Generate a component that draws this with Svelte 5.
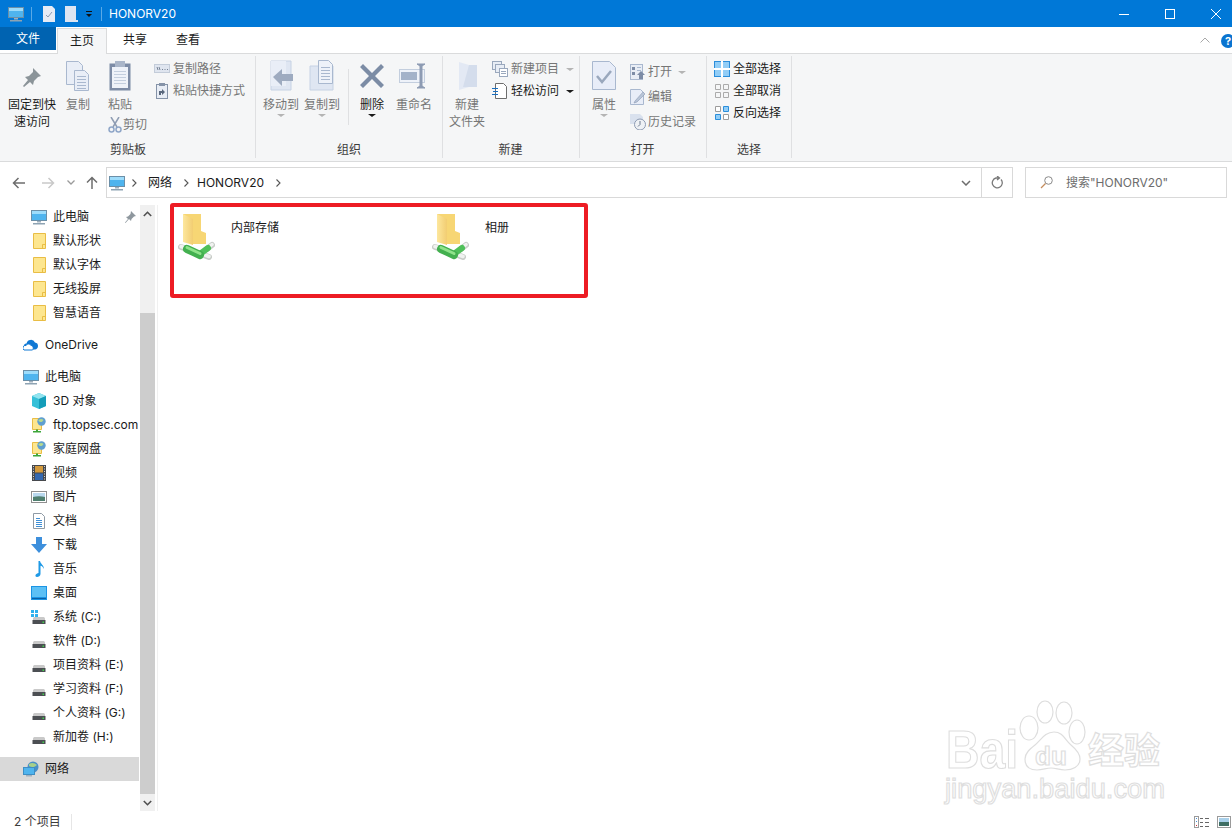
<script>
  const clipSmall = [
    { label: '复制路径', icon: 'path' },
    { label: '粘贴快捷方式', icon: 'shortcut' }
  ];
  const selectRows = [
    { label: '全部选择', icon: 'all' },
    { label: '全部取消', icon: 'none' },
    { label: '反向选择', icon: 'invert' }
  ];
  const quick = ['默认形状', '默认字体', '无线投屏', '智慧语音'];
  const computer = [
    { label: '3D 对象', icon: 'cube' },
    { label: 'ftp.topsec.com', icon: 'netplace' },
    { label: '家庭网盘', icon: 'netplace' },
    { label: '视频', icon: 'film' },
    { label: '图片', icon: 'picture' },
    { label: '文档', icon: 'document' },
    { label: '下载', icon: 'download' },
    { label: '音乐', icon: 'music' },
    { label: '桌面', icon: 'desktop' },
    { label: '系统 (C:)', icon: 'system' },
    { label: '软件 (D:)', icon: 'drive' },
    { label: '项目资料 (E:)', icon: 'drive' },
    { label: '学习资料 (F:)', icon: 'drive' },
    { label: '个人资料 (G:)', icon: 'drive' },
    { label: '新加卷 (H:)', icon: 'drive' }
  ];
  const shares = ['内部存储', '相册'];
</script>

{#snippet monitor()}
  <svg width="16" height="16" viewBox="0 0 16 16">
    <rect x="0.500" y="1.500" width="15" height="10" fill="#4fb4ee" stroke="#6b8fa8" />
    <rect x="1" y="2" width="14" height="3" fill="#9ddcfb" />
    <rect x="6" y="12" width="4" height="1.500" fill="#9fb0bd" />
    <rect x="2" y="14" width="12" height="1.500" fill="#8ea3b3" />
  </svg>
{/snippet}

{#snippet quickFolder()}
  <svg width="16" height="16" viewBox="0 0 16 16">
    <path d="M2.500 0.500h12v15h-12z" fill="#fde68f" stroke="#e9bd45" />
    <path d="M11.500 15.500v-4h3" fill="none" stroke="#e9bd45" />
  </svg>
{/snippet}

{#snippet treeIcon(name)}
  {#if name === 'cube'}
    <svg width="16" height="16" viewBox="0 0 16 16">
      <path d="M8 0l7 3v10l-7 3-7-3V3z" fill="#35c0d8" />
      <path d="M8 0l7 3-7 3-7-3z" fill="#93e4ef" />
      <path d="M8 6l7-3v10l-7 3z" fill="#149db9" />
    </svg>
  {:else if name === 'netplace'}
    <svg width="16" height="16" viewBox="0 0 16 16">
      <path d="M1.500 1.500h9v11h-9z" fill="#fde68f" stroke="#e9bd45" />
      <circle cx="10.500" cy="4.500" r="4.200" fill="#5f9fd0" />
      <path d="M7.500 3c2-1.500 4-1 5 0-1 2-3 3-5 1z" fill="#b5d98e" />
      <rect x="5" y="12.500" width="2" height="2" fill="#3da63a" />
      <rect x="2" y="14" width="8" height="1.500" fill="#3da63a" />
    </svg>
  {:else if name === 'film'}
    <svg width="16" height="16" viewBox="0 0 16 16">
      <rect x="1" y="0" width="14" height="16" fill="#47494d" />
      <rect x="4" y="1" width="8" height="6.500" fill="#d49a3d" />
      <rect x="4" y="8.500" width="8" height="6.500" fill="#3468b0" />
      <path d="M2 1.500h1M2 4h1M2 6.500h1M2 9h1M2 11.500h1M2 14h1M13 1.500h1M13 4h1M13 6.500h1M13 9h1M13 11.500h1M13 14h1" stroke="#d6d6d6" />
    </svg>
  {:else if name === 'picture'}
    <svg width="16" height="16" viewBox="0 0 16 16">
      <rect x="0.500" y="2.500" width="15" height="11" fill="#fff" stroke="#8f8f8f" />
      <rect x="2" y="4" width="12" height="4" fill="#b9d8ee" />
      <path d="M2 8c4-1 8-1 12 0v4H2z" fill="#4f7f6f" />
    </svg>
  {:else if name === 'document'}
    <svg width="16" height="16" viewBox="0 0 16 16">
      <path d="M2.500 0.500h8l3 3v12h-11z" fill="#fff" stroke="#8f9aa5" />
      <path d="M5 5.500h4M5 7.500h6M5 9.500h6M5 11.500h6M5 13.500h6" stroke="#3f8fd6" />
    </svg>
  {:else if name === 'download'}
    <svg width="16" height="16" viewBox="0 0 16 16">
      <path d="M5 0h6v7h5l-8 9-8-9h5z" fill="#3d8fdc" />
    </svg>
  {:else if name === 'music'}
    <svg width="16" height="16" viewBox="0 0 16 16">
      <path d="M7.500 0h1.500c.5 3 4 4 4 8-1-2-2-3-3.500-3.300V13c0 2-2 3-3.500 3S4 14.500 4.800 13.500 6.500 12 7.500 12z" fill="#1f9ae6" />
    </svg>
  {:else if name === 'desktop'}
    <svg width="16" height="16" viewBox="0 0 16 16">
      <rect x="0" y="1" width="16" height="14" fill="#1b94e4" />
      <rect x="1" y="2" width="14" height="10" fill="#5cc0f5" />
      <rect x="1" y="13" width="14" height="1" fill="#0b5fa5" />
    </svg>
  {:else}
    <svg width="16" height="16" viewBox="0 0 16 16">
      {#if name === 'system'}
        <path d="M0 1h3v3H0zM4 1h3v3H4zM0 5h3v3H0zM4 5h3v3H4z" fill="#2fb1ee" />
      {/if}
      <path d="M2 9.500c0-1 1-1.500 2-1.500h8c1 0 2 .5 2 1.500V11H2z" fill="#c9c9c9" />
      <rect x="1.500" y="11" width="13" height="4" fill="#4c4f53" />
      <rect x="11.500" y="12.500" width="1.500" height="1.500" fill="#3fd04a" />
    </svg>
  {/if}
{/snippet}

{#snippet shareFolder()}
  <svg class="share-icon" width="37" height="50" viewBox="0 0 37 50">
    <defs>
      <linearGradient id="share-front" x1="0" y1="0" x2="1" y2="0">
        <stop offset="0" stop-color="#fde79d" />
        <stop offset="1" stop-color="#f2cd72" />
      </linearGradient>
    </defs>
    <path d="M5 1h18v17l5 2v11H12z" fill="#f7d674" />
    <path d="M5 1l10 5v26l-10-3z" fill="url(#share-front)" />
    <path d="M3 34l6 2M34 32l-5 4M31 44l-8-3" stroke="#c8ccc8" stroke-width="6" stroke-linecap="round" />
    <path d="M3 33.500l6 2M34 31.500l-5 4M31 43.500l-8-3" stroke="#f0f2f0" stroke-width="3.500" stroke-linecap="round" />
    <path d="M22 41l8-6" stroke="#4fc05a" stroke-width="6" stroke-linecap="round" />
    <path d="M9 36l13 6" stroke="#43b04f" stroke-width="8" stroke-linecap="round" />
    <path d="M9 34.500l13 6" stroke="#8fe38a" stroke-width="3" stroke-linecap="round" />
  </svg>
{/snippet}

<div class="window">
  <header class="titlebar">
    <span class="qa-icon qa-monitor">{@render monitor()}</span>
    <span class="qa-sep"></span>
    <svg class="qa-doc" width="12" height="16" viewBox="0 0 12 16">
      <path d="M0 0h9l3 3v13H0z" fill="#e6ebf5" />
      <path d="M3 9l2 2 4-5" fill="none" stroke="#8d9bb3" />
    </svg>
    <svg class="qa-new" width="13" height="16" viewBox="0 0 13 16">
      <path d="M0 0h11v14l2 0v2H0z" fill="#dde5f2" />
    </svg>
    <svg class="qa-drop" width="8" height="8" viewBox="0 0 8 8">
      <path d="M1 1.500h6" stroke="#111" stroke-width="1" />
      <path d="M1 4h6L4 7z" fill="#111" />
    </svg>
    <span class="qa-sep"></span>
    <span class="title">HONORV20</span>
    <div class="window-buttons">
      <svg width="12" height="12" viewBox="0 0 12 12"><path d="M1 6.500h10" stroke="#fff" /></svg>
      <svg width="12" height="12" viewBox="0 0 12 12"><rect x="1.500" y="1.500" width="9" height="9" fill="none" stroke="#fff" /></svg>
      <svg width="12" height="12" viewBox="0 0 12 12"><path d="M1 1l10 10M11 1L1 11" stroke="#fff" /></svg>
    </div>
  </header>

  <nav class="tabs">
    <span class="tab-file">文件</span>
    <span class="tab-home">主页</span>
    <span class="tab">共享</span>
    <span class="tab tab-view">查看</span>
    <svg class="collapse" width="10" height="6" viewBox="0 0 10 6"><path d="M0.500 5.500L5 1l4.500 4.500" fill="none" stroke="#a8a8a8" /></svg>
    <span class="help">?</span>
  </nav>

  <section class="ribbon">
    <div class="group group-clip">
      <div class="group-body">
        <div class="big big-pin">
          <svg width="32" height="32" viewBox="0 0 32 32">
            <path d="M17 8l8 8-3 1-4 4-1 4-3-3-6 5-1-1 5-6-3-3 4-1 4-4z" fill="#8b9499" />
          </svg>
          <span class="big-label dark">固定到快<br />速访问</span>
        </div>
        <div class="big big-copy">
          <svg width="32" height="32" viewBox="0 0 32 32">
            <path d="M4.500 1.500h12l4 4v19h-16z" fill="#e9eef7" stroke="#a9b8cf" />
            <path d="M12.500 10.500h10l4 4v16h-14z" fill="#e9eef7" stroke="#a9b8cf" />
            <path d="M15 16.500h9M15 19.500h9M15 22.500h9M15 25.500h9M15 28.500h9" stroke="#a9b8cf" />
          </svg>
          <span class="big-label">复制</span>
        </div>
        <div class="big big-paste">
          <svg width="32" height="32" viewBox="0 0 32 32">
            <rect x="5.500" y="3.500" width="21" height="27" fill="#7d8ca6" />
            <rect x="8" y="7" width="16" height="21" fill="#eef2f9" />
            <rect x="11" y="1" width="10" height="6" fill="#aab6c9" />
            <path d="M10 11.500h12M10 14.500h12M10 17.500h12M10 20.500h12M10 23.500h12" stroke="#c3cede" />
          </svg>
          <span class="big-label">粘贴</span>
          <div class="cut">
            <svg width="16" height="16" viewBox="0 0 16 16">
              <path d="M4 0l6 10M12 0L6 10" stroke="#8f9db3" stroke-width="1.500" />
              <circle cx="4.500" cy="12.500" r="2.500" fill="none" stroke="#8fa6c8" stroke-width="1.500" />
              <circle cx="11.500" cy="12.500" r="2.500" fill="none" stroke="#8fa6c8" stroke-width="1.500" />
            </svg>
            <span class="muted">剪切</span>
          </div>
        </div>
        <div class="small-col small-clip">
          {#each clipSmall as row}
            <div class="small-row">
              {#if row.icon === 'path'}
                <svg width="16" height="16" viewBox="0 0 16 16">
                  <rect x="0.500" y="3.500" width="15" height="8" fill="#dfe5ef" stroke="#c3ccd9" />
                  <path d="M3 6l1 3M5 6l1 3M8 8.500h1M10.500 8.500h1M13 8.500h1" stroke="#59677c" stroke-width="0.800" />
                </svg>
              {:else}
                <svg width="16" height="16" viewBox="0 0 16 16">
                  <rect x="2.500" y="1.500" width="11" height="14" fill="#e8edf5" stroke="#8593a8" />
                  <rect x="5" y="0" width="6" height="3" fill="#8593a8" />
                  <path d="M5 12V8h3V6l3 3-3 3v-2H7v2z" fill="#59677c" />
                </svg>
              {/if}
              <span class="muted">{row.label}</span>
            </div>
          {/each}
        </div>
      </div>
      <div class="group-label">剪贴板</div>
    </div>

    <div class="group group-org">
      <div class="group-body">
        <div class="big">
          <svg width="32" height="32" viewBox="0 0 32 32">
            <path d="M6 1h20v29l-20 0z" fill="#dfe6f2" stroke="#c6d2e4" />
            <path d="M6 1h15v25H6z" fill="#e9eef7" />
            <path d="M8 17l9-8v5h11v7H17v5z" fill="#9eabc0" />
          </svg>
          <span class="big-label">移动到</span>
          <span class="caret-muted"></span>
        </div>
        <div class="big big-copyto">
          <svg width="32" height="32" viewBox="0 0 32 32">
            <path d="M4 6h23v24H4z" fill="#dfe6f2" stroke="#c6d2e4" />
            <path d="M12.500 0.500h10l4 4v19h-14z" fill="#eef2f9" stroke="#a9b8cf" />
            <path d="M15 7.500h9M15 10.500h9M15 13.500h9M15 16.500h9M15 19.500h9" stroke="#a9b8cf" />
          </svg>
          <span class="big-label">复制到</span>
          <span class="caret-muted"></span>
        </div>
        <span class="rule"></span>
        <div class="big big-delete">
          <svg width="32" height="32" viewBox="0 0 32 32">
            <path d="M4 7l3-3 9 9 9-9 3 3-9 9 9 9-3 3-9-9-9 9-3-3 9-9z" fill="#7c8ca5" />
          </svg>
          <span class="big-label dark">删除</span>
          <span class="caret-dark"></span>
        </div>
        <div class="big big-rename">
          <svg width="32" height="32" viewBox="0 0 32 32">
            <rect x="1.500" y="9.500" width="25" height="13" fill="#eef2f9" stroke="#c3cede" />
            <rect x="3" y="12" width="16" height="8" fill="#a3b2c9" />
            <path d="M19 4h8l-3 2v20l3 2h-8l3-2V6z" fill="#8d9bb3" stroke="#8d9bb3" />
          </svg>
          <span class="big-label">重命名</span>
        </div>
      </div>
      <div class="group-label">组织</div>
    </div>

    <div class="group group-new">
      <div class="group-body">
        <div class="big">
          <svg width="32" height="32" viewBox="0 0 32 32">
            <path d="M8 2l10 3v22l-10 3z" fill="#e3e9f4" />
            <path d="M18 5h8v22H12z" fill="#d4ddec" />
          </svg>
          <span class="big-label">新建<br />文件夹</span>
        </div>
        <div class="small-col small-new">
          <div class="small-row">
            <svg width="16" height="16" viewBox="0 0 16 16">
              <rect x="0.500" y="0.500" width="9" height="8" fill="#e8edf5" stroke="#9aa8bd" />
              <rect x="3.500" y="3.500" width="9" height="8" fill="#e8edf5" stroke="#9aa8bd" />
              <rect x="7.500" y="7.500" width="8" height="8" fill="#fff" stroke="#9aa8bd" />
              <path d="M9 10.500h5M9 12.500h5" stroke="#9aa8bd" />
            </svg>
            <span class="muted">新建项目</span>
            <span class="caret-muted inline"></span>
          </div>
          <div class="small-row">
            <svg width="16" height="16" viewBox="0 0 16 16">
              <path d="M3.500 0.500h8l3 3v12h-11z" fill="#fff" stroke="#6d6d6d" />
              <path d="M0 5.500h6M1 8.500h5M0 11.500h6" stroke="#1a6fc0" />
            </svg>
            <span class="dark">轻松访问</span>
            <span class="caret-dark inline"></span>
          </div>
        </div>
      </div>
      <div class="group-label">新建</div>
    </div>

    <div class="group group-open">
      <div class="group-body">
        <div class="big">
          <svg width="32" height="32" viewBox="0 0 32 32">
            <path d="M4.500 1.500h17l6 6v22h-23z" fill="#e8edf8" stroke="#a9b8cf" />
            <path d="M9 16l5 6 9-11" fill="none" stroke="#9aa8bd" stroke-width="2.500" />
          </svg>
          <span class="big-label">属性</span>
          <span class="caret-muted"></span>
        </div>
        <div class="small-col small-open">
          <div class="small-row">
            <svg width="16" height="16" viewBox="0 0 16 16">
              <rect x="0.500" y="0.500" width="12" height="15" fill="#e8edf5" stroke="#a9b8cf" />
              <path d="M2 3h3v3H2zM2 8h3v3H2z" fill="#7d8ca6" />
              <path d="M7 3.500h4M7 6.500h4" stroke="#a9b8cf" />
              <path d="M9 15V11H7l4-4 4 4h-2v4z" fill="#7d8ca6" />
            </svg>
            <span class="muted">打开</span>
            <span class="caret-muted inline"></span>
          </div>
          <div class="small-row">
            <svg width="16" height="16" viewBox="0 0 16 16">
              <path d="M0.500 0.500h10l3 3v12h-13z" fill="#e8edf8" stroke="#a9b8cf" />
              <path d="M5 12l8-9 2 2-8 8-3 1z" fill="#b8c5d8" stroke="#8d9bb3" stroke-width="0.600" />
            </svg>
            <span class="muted">编辑</span>
          </div>
          <div class="small-row">
            <svg width="16" height="16" viewBox="0 0 16 16">
              <path d="M0 0h10l3 3v7H0z" fill="#d9e1ee" />
              <circle cx="10" cy="10.500" r="5.500" fill="#eef1f5" stroke="#8d9bb3" />
              <path d="M10 7v3.500l-2 2" fill="none" stroke="#6c7a90" />
            </svg>
            <span class="muted">历史记录</span>
          </div>
        </div>
      </div>
      <div class="group-label">打开</div>
    </div>

    <div class="group group-select">
      <div class="group-body">
        <div class="small-col small-select">
          {#each selectRows as row}
            <div class="small-row">
              <svg width="16" height="16" viewBox="0 0 16 16">
                {#if row.icon === 'all'}
                  <rect x="0.500" y="0.500" width="15" height="15" fill="#92cdf6" stroke="#2b8edb" />
                  <path d="M8 0v16M0 8h16" stroke="#fff" stroke-width="2" />
                {:else if row.icon === 'none'}
                  <path d="M1.500 1.500h5v5h-5zM9.500 1.500h5v5h-5zM1.500 9.500h5v5h-5zM9.500 9.500h5v5h-5z" fill="none" stroke="#ababab" />
                {:else}
                  <path d="M1.500 1.500h5v5h-5zM9.500 9.500h5v5h-5z" fill="#fff" stroke="#9c9c9c" />
                  <path d="M9.500 1.500h5v5h-5zM1.500 9.500h5v5h-5z" fill="#92cdf6" stroke="#2b8edb" />
                {/if}
              </svg>
              <span class="dark">{row.label}</span>
            </div>
          {/each}
        </div>
      </div>
      <div class="group-label">选择</div>
    </div>
  </section>

  <div class="addressbar">
    <div class="nav-buttons">
      <svg width="14" height="12" viewBox="0 0 14 12"><path d="M13 6H2M6.500 1L1.500 6l5 5" fill="none" stroke="#6d6d6d" stroke-width="1.500" /></svg>
      <svg class="nav-forward" width="14" height="12" viewBox="0 0 14 12"><path d="M1 6h11M7.500 1l5 5-5 5" fill="none" stroke="#c9c9c9" stroke-width="1.500" /></svg>
      <svg class="nav-recent" width="8" height="5" viewBox="0 0 8 5"><path d="M0.500 0.500L4 4l3.500-3.500" fill="none" stroke="#9a9a9a" stroke-width="1.300" /></svg>
      <svg class="nav-up" width="12" height="14" viewBox="0 0 12 14"><path d="M6 13V2M1 6.500L6 1.500l5 5" fill="none" stroke="#6d6d6d" stroke-width="1.500" /></svg>
    </div>
    <div class="path-box">
      <span class="path-icon">{@render monitor()}</span>
      <svg class="chev" width="5" height="8" viewBox="0 0 5 8"><path d="M0.500 0.500L4 4 0.500 7.500" fill="none" stroke="#555" stroke-width="1.100" /></svg>
      <span class="crumb">网络</span>
      <svg class="chev" width="5" height="8" viewBox="0 0 5 8"><path d="M0.500 0.500L4 4 0.500 7.500" fill="none" stroke="#555" stroke-width="1.100" /></svg>
      <span class="crumb">HONORV20</span>
      <svg class="chev" width="5" height="8" viewBox="0 0 5 8"><path d="M0.500 0.500L4 4 0.500 7.500" fill="none" stroke="#555" stroke-width="1.100" /></svg>
      <span class="path-drop">
        <svg width="10" height="6" viewBox="0 0 10 6"><path d="M1 1l4 4 4-4" fill="none" stroke="#6d6d6d" stroke-width="1.500" /></svg>
      </span>
      <span class="path-refresh">
        <svg width="12" height="13" viewBox="0 0 12 13"><path d="M10 3.500A5 5 0 1 1 5 2h3M6 0l2.500 2L6 4" fill="none" stroke="#7a7a7a" stroke-width="1.300" /></svg>
      </span>
    </div>
    <div class="search-box">
      <svg width="13" height="13" viewBox="0 0 13 13"><circle cx="8.500" cy="4.500" r="3.800" fill="none" stroke="#8a8a8a" /><path d="M5.500 7.500L1 12" stroke="#c48c5c" stroke-width="1.200" /></svg>
      <span>搜索"HONORV20"</span>
    </div>
  </div>

  <div class="body">
    <aside class="sidebar">
      <div class="tree">
        <div class="tree-row indent">
          {@render monitor()}
          <span>此电脑</span>
          <svg class="pin" width="12" height="12" viewBox="0 0 12 12"><path d="M7 0l5 5-2 .5-2.500 2.500-.5 2-2-2L1.500 12 1 11.500 4 8 2 6l2-.5L6.500 3z" fill="#8e979e" /></svg>
        </div>
        {#each quick as name}
          <div class="tree-row indent">{@render quickFolder()}<span>{name}</span></div>
        {/each}
        <div class="tree-row top-gap">
          <svg width="16" height="16" viewBox="0 0 16 16">
            <path d="M4 12.500a3 3 0 0 1-.5-6 4.500 4.500 0 0 1 8.500-1 3.500 3.500 0 0 1 3 3.500c0 2-1.500 3.500-3 3.500z" fill="#0f78d4" />
            <path d="M1 13a2.500 2.500 0 0 1 2-4.500c1-2 4-2 5 0 2 0 3 3 1.500 4.500z" fill="#fff" stroke="#0f78d4" />
          </svg>
          <span>OneDrive</span>
        </div>
        <div class="tree-row top-gap">{@render monitor()}<span>此电脑</span></div>
        {#each computer as item}
          <div class="tree-row indent">{@render treeIcon(item.icon)}<span>{item.label}</span></div>
        {/each}
        <div class="tree-row top-gap selected">
          <svg width="16" height="16" viewBox="0 0 16 16">
            <circle cx="10" cy="6" r="5.500" fill="#4a8fc8" />
            <path d="M6 3c3-2 6-1 8 1-2 2-5 3-8 1z" fill="#a8d08a" />
            <rect x="0.500" y="6.500" width="11" height="7" fill="#4fb4ee" stroke="#3e8ec4" />
            <rect x="3" y="14" width="6" height="1.500" fill="#9fb0bd" />
          </svg>
          <span>网络</span>
        </div>
      </div>
    </aside>
    <div class="scrollbar">
      <span class="scroll-btn">
        <svg width="9" height="6" viewBox="0 0 9 6"><path d="M0.800 5L4.500 1.300 8.200 5" fill="none" stroke="#505050" stroke-width="1.600" /></svg>
      </span>
      <span class="scroll-track"></span>
      <span class="scroll-thumb"></span>
      <span class="scroll-btn">
        <svg width="9" height="6" viewBox="0 0 9 6"><path d="M0.800 1L4.500 4.700 8.200 1" fill="none" stroke="#505050" stroke-width="1.600" /></svg>
      </span>
    </div>
    <main class="content">
      {#each shares as name}
        <div class="share">
          {@render shareFolder()}
          <span class="share-name">{name}</span>
        </div>
      {/each}
      <div class="highlight"></div>
    </main>
  </div>

  <footer class="statusbar">
    <span class="count">2 个项目</span>
    <div class="views">
      <svg width="16" height="12" viewBox="0 0 16 12">
        <rect x="0.500" y="0.500" width="4" height="11" fill="#fff" stroke="#9a9a9a" />
        <path d="M2 2.500h1M2 5.500h1" stroke="#4a90d9" /><path d="M2 9.500h1" stroke="#d03030" />
        <path d="M6 2.500h3M11 2.500h4M6 6.500h3M11 6.500h4M6 10.500h3M11 10.500h4" stroke="#666" />
      </svg>
      <svg width="14" height="12" viewBox="0 0 14 12">
        <rect x="0.500" y="0.500" width="13" height="11" fill="#fff" stroke="#9a9a9a" />
        <rect x="2" y="2" width="10" height="4" fill="#a9d0ea" />
        <rect x="2" y="6" width="10" height="4" fill="#3f6f64" />
      </svg>
    </div>
  </footer>

  <svg class="watermark" width="240" height="110" viewBox="0 0 240 110">
    <g class="mark">
      <ellipse cx="109" cy="17" rx="8" ry="11" />
      <ellipse cx="128" cy="18" rx="8" ry="11" />
      <ellipse cx="93" cy="33" rx="9" ry="12" />
      <ellipse cx="141" cy="37" rx="8" ry="12" />
      <path d="M118 37c9 0 11 8 17 13 6 5 9 9 9 14 0 8-8 11-15 11-6 0-9-2-14-2-5 0-8 2-14 2-7 0-12-3-12-11 0-6 5-10 10-14 6-5 10-13 19-13z" />
      <text x="10" y="73" class="mark-big" textLength="72" lengthAdjust="spacingAndGlyphs">Bai</text>
      <text x="99" y="70" class="mark-du">du</text>
      <text x="152" y="69" class="mark-cn">经验</text>
      <text x="9" y="103" class="mark-url" textLength="220" lengthAdjust="spacingAndGlyphs">jingyan.baidu.com</text>
    </g>
  </svg>
</div>

<style>
  :global(body) {
    margin: 0;
    background: #fff;
  }

  .window {
    position: relative;
    width: 1232px;
    height: 832px;
    overflow: hidden;
    display: flex;
    flex-direction: column;
    background: #fff;
    color: #1a1a1a;
    font-family: Inter, "Noto Sans CJK SC", sans-serif;
    font-size: 12px;
    line-height: 16px;
  }

  .titlebar {
    height: 27px;
    flex: none;
    display: flex;
    align-items: center;
    background: #0078d7;
    color: #fff;
    padding-left: 8px;
  }

  .qa-icon {
    display: flex;
  }

  .qa-sep {
    width: 1px;
    height: 14px;
    background: #5aa9e6;
    margin: 0 7px;
  }

  .qa-doc {
    margin-left: 4px;
  }

  .qa-new {
    margin-left: 10px;
  }

  .qa-drop {
    margin-left: 7px;
    margin-right: 1px;
  }

  .window-buttons {
    margin-left: auto;
    display: flex;
    gap: 34px;
    padding-right: 10px;
  }

  .tabs {
    height: 27px;
    flex: none;
    display: flex;
    align-items: flex-end;
    background: #fff;
    border-bottom: 1px solid #dadbdc;
    box-sizing: border-box;
    position: relative;
  }

  .tab-file {
    width: 56px;
    height: 23px;
    margin-bottom: 3px;
    background: #0063b1;
    color: #fff;
    text-align: center;
    line-height: 24px;
  }

  .tab-home {
    width: 50px;
    height: 26px;
    margin-left: 1px;
    margin-bottom: -1px;
    background: #f5f6f7;
    border: 1px solid #dadbdc;
    border-bottom: none;
    box-sizing: border-box;
    text-align: center;
    line-height: 23px;
    position: relative;
  }

  .tab {
    margin-left: 16px;
    align-self: center;
  }

  .tab-view {
    margin-left: 29px;
  }

  .collapse {
    position: absolute;
    right: 22px;
    top: 10px;
  }

  .help {
    position: absolute;
    left: 1221px;
    top: 7px;
    width: 14px;
    height: 14px;
    border-radius: 50%;
    background: #0a74d0;
    color: #fff;
    font-weight: 700;
    font-size: 11px;
    line-height: 14px;
    text-align: center;
  }

  .ribbon {
    height: 108px;
    flex: none;
    box-sizing: border-box;
    display: flex;
    background: #f5f6f7;
    border-bottom: 1px solid #dadbdc;
    padding-top: 2px;
    padding-bottom: 3px;
  }

  .group {
    box-sizing: border-box;
    display: flex;
    flex-direction: column;
    justify-content: space-between;
    border-right: 1px solid #dfe0e2;
    flex: none;
  }

  .group-clip { width: 256px; padding-left: 8px; }
  .group-org { width: 187px; padding-left: 7px; }
  .group-new { width: 137px; padding-left: 6px; }
  .group-open { width: 127px; padding-left: 6px; }
  .group-select { width: 85px; padding-left: 7px; }

  .group-body {
    display: flex;
    align-items: flex-start;
  }

  .group-label {
    height: 16px;
    text-align: center;
    color: #3c3c3c;
    margin-left: -7px;
  }

  .big {
    width: 36px;
    display: flex;
    flex-direction: column;
    align-items: center;
    padding-top: 4px;
    color: #767676;
    white-space: nowrap;
  }

  .big-label {
    margin-top: 4px;
    text-align: center;
    line-height: 17px;
  }

  .big-pin { width: 48px; }
  .big-copy { margin-left: 4px; }
  .big-paste { width: 48px; align-items: stretch; }
  .big-paste > svg { align-self: center; }
  .big-copyto { margin-left: 5px; }
  .big-delete { margin-left: 5px; }
  .big-rename { margin-left: 6px; }

  .rule {
    width: 1px;
    height: 56px;
    margin-top: 13px;
    margin-left: 8px;
    background: #dfe0e2;
  }

  .cut {
    display: flex;
    align-items: center;
    margin-top: 4px;
    margin-left: 11px;
  }

  .cut svg {
    flex: none;
  }

  .dark {
    color: #1a1a1a;
  }

  .muted {
    color: #767676;
  }

  .caret-muted,
  .caret-dark {
    width: 0;
    height: 0;
    border-left: 4px solid transparent;
    border-right: 4px solid transparent;
    border-top: 3px solid #b4b4b4;
    margin-top: 1px;
  }

  .caret-dark {
    border-top-color: #1a1a1a;
  }

  .inline {
    margin-left: 4px;
  }

  .small-col {
    display: flex;
    flex-direction: column;
    margin-top: 2px;
  }

  .small-row {
    display: flex;
    align-items: center;
    gap: 3px;
    height: 22px;
    white-space: nowrap;
  }

  .small-clip { margin-left: 10px; }
  .small-new { margin-left: 7px; }
  .small-open { margin-left: 8px; margin-top: 3px; }
  .small-open .small-row { height: 25px; gap: 2px; }

  .addressbar {
    height: 43px;
    flex: none;
    box-sizing: border-box;
    display: flex;
    align-items: flex-start;
    padding-top: 5px;
  }

  .nav-buttons {
    width: 106px;
    height: 31px;
    display: flex;
    align-items: center;
    padding-left: 12px;
    box-sizing: border-box;
  }

  .nav-forward { margin-left: 15px; }
  .nav-recent { margin-left: 12px; }
  .nav-up { margin-left: 11px; }

  .path-box {
    width: 907px;
    height: 31px;
    box-sizing: border-box;
    border: 1px solid #d9d9d9;
    display: flex;
    align-items: center;
    padding-left: 2px;
    color: #1a1a1a;
  }

  .path-icon {
    display: flex;
  }

  .chev {
    margin-left: 7px;
    margin-right: 11px;
  }

  .crumb + .chev {
    margin-left: 12px;
    margin-right: 8px;
  }

  .path-drop {
    margin-left: auto;
    width: 30px;
    height: 29px;
    display: flex;
    align-items: center;
    justify-content: center;
  }

  .path-refresh {
    width: 30px;
    height: 29px;
    border-left: 1px solid #d9d9d9;
    display: flex;
    align-items: center;
    justify-content: center;
  }

  .search-box {
    width: 202px;
    height: 31px;
    margin-left: 12px;
    box-sizing: border-box;
    border: 1px solid #d9d9d9;
    display: flex;
    align-items: center;
    gap: 13px;
    padding-left: 14px;
    color: #6d6d6d;
  }

  .body {
    flex: 1;
    display: flex;
    min-height: 0;
  }

  .sidebar {
    width: 140px;
    flex: none;
    overflow: hidden;
  }

  .tree-row {
    height: 24px;
    width: 139px;
    box-sizing: border-box;
    display: flex;
    align-items: center;
    gap: 6px;
    padding-left: 23px;
    white-space: nowrap;
    position: relative;
  }

  .indent {
    padding-left: 31px;
  }

  .top-gap {
    margin-top: 8px;
  }

  .selected {
    background: #d9d9d9;
  }

  .pin {
    position: absolute;
    right: 3px;
    top: 6px;
  }

  .scrollbar {
    width: 15px;
    flex: none;
    display: flex;
    flex-direction: column;
    background: #f0f0f0;
  }

  .scroll-btn {
    height: 17px;
    flex: none;
    display: flex;
    align-items: center;
    justify-content: center;
  }

  .scroll-track {
    height: 91px;
    flex: none;
  }

  .scroll-thumb {
    flex: 1;
    background: #cdcdcd;
  }

  .content {
    flex: 1;
    position: relative;
    display: flex;
    align-items: flex-start;
    margin-left: 2px;
    border-left: 1px solid #f0f0f0;
    padding: 8px 0 0 20px;
  }

  .share {
    width: 254px;
    display: flex;
    gap: 16px;
  }

  .share-icon {
    flex: none;
  }

  .share-name {
    margin-top: 7px;
  }

  .highlight {
    position: absolute;
    left: 12px;
    top: -2px;
    width: 418px;
    height: 95px;
    box-sizing: border-box;
    border: 4px solid #ed1c24;
    border-radius: 3px;
  }

  .statusbar {
    height: 21px;
    flex: none;
    display: flex;
    align-items: center;
    padding-left: 14px;
    color: #3c3c3c;
  }

  .count {
    width: 57px;
    border-right: 1px solid #e6e6e6;
  }

  .views {
    margin-left: auto;
    display: flex;
    align-items: center;
    gap: 7px;
    padding-right: 1px;
  }

  .watermark {
    position: absolute;
    left: 936px;
    top: 695px;
    overflow: visible;
  }

  .mark {
    fill: #fff;
    stroke: #dedede;
    stroke-width: 1.200;
  }

  .mark-big {
    font-family: "Liberation Sans", sans-serif;
    font-weight: 700;
    font-size: 53px;
  }

  .mark-du {
    font-family: "Liberation Sans", sans-serif;
    font-weight: 700;
    font-size: 26px;
  }

  .mark-cn {
    font-family: "Noto Sans CJK SC", sans-serif;
    font-weight: 700;
    font-size: 36px;
  }

  .mark-url {
    font-family: "Liberation Sans", sans-serif;
    font-size: 28px;
  }
</style>
